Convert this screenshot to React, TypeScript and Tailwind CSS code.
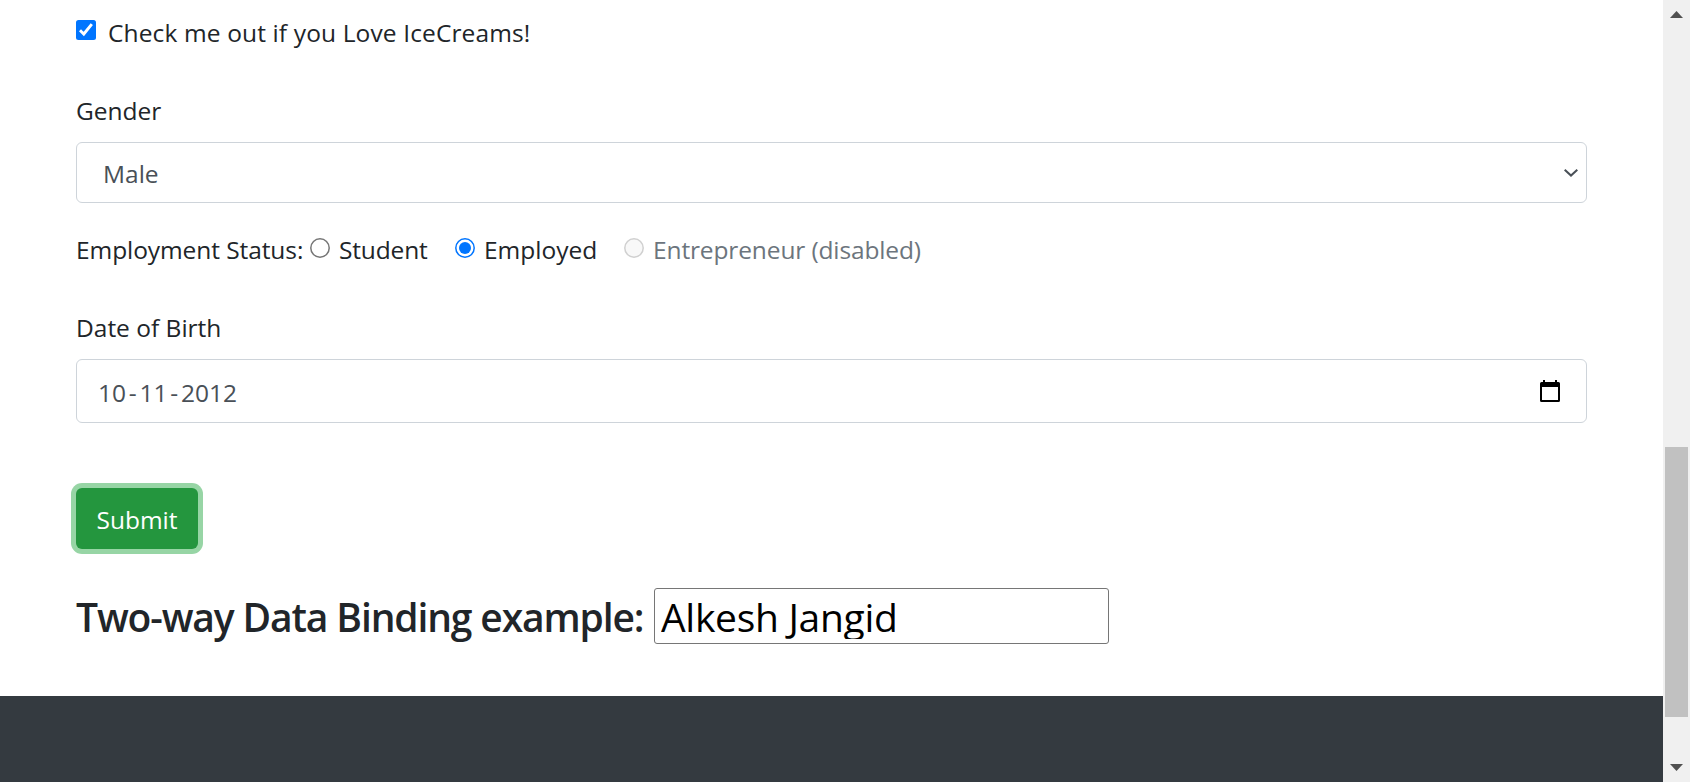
import type { ReactNode } from "react";

function CheckedBox() {
  return (
    <svg className="block size-5 shrink-0" viewBox="0 0 20 20">
      <rect width="20" height="20" rx="2.5" fill="#0075ff" />
      <path d="M4 10.3 L7.8 14 L15.8 4.2" fill="none" stroke="#fff" strokeWidth="2.9" />
    </svg>
  );
}

function Radio({ state }: { state: "off" | "on" | "disabled" }) {
  const stroke = state === "on" ? "#0075ff" : state === "off" ? "#767676" : "#d0d0d0";
  return (
    <svg className="mt-1.5 block size-5 shrink-0" viewBox="0 0 20 20">
      <circle cx="10" cy="10" r="9.2" fill={state === "disabled" ? "#f8f8f8" : "#fff"} stroke={stroke} strokeWidth="1.5" />
      {state === "on" && <circle cx="10" cy="10" r="6" fill="#0075ff" />}
    </svg>
  );
}

function Label({ children }: { children: ReactNode }) {
  return <div className="h-9 leading-9">{children}</div>;
}

function ScrollBar() {
  return (
    <div className="flex w-[27px] shrink-0 flex-col items-center bg-[#f0f0f0] pr-px">
      <svg className="mt-[11px] block h-[7px] w-[13px]" viewBox="0 0 13 7">
        <path d="M6.5 0 L13 7 H0 Z" fill="#505050" />
      </svg>
      <div className="mt-[429px] h-[270px] w-[23px] bg-[#c1c1c1]" />
      <svg className="mt-[47px] block h-[7px] w-[13px]" viewBox="0 0 13 7">
        <path d="M0 0 H13 L6.5 7 Z" fill="#505050" />
      </svg>
    </div>
  );
}

export default function App() {
  return (
    <div className="flex h-[782px] w-[1690px] overflow-hidden bg-white font-['Open_Sans',sans-serif] text-[24.5px] whitespace-nowrap text-[#212529]">
      <div className="flex flex-1 flex-col">
        <div className="h-[696px] shrink-0 pr-[76px] pl-[76px] pt-[15px]">
          <div className="flex h-9 leading-9">
            <div className="pt-[5px]"><CheckedBox /></div>
            <span className="ml-3 tracking-[0.13px]">Check me out if you Love IceCreams!</span>
          </div>
          <div className="mt-[42px]"><Label>Gender</Label></div>
          <div className="mt-[13px] flex h-[61px] items-center justify-between rounded-md border border-[#ced4da] pr-[8px] pl-[26px] text-[#495057]">
            <span className="pt-[3px]">Male</span>
            <svg className="block h-[8px] w-[14px]" viewBox="0 0 14 8">
              <path d="M0.7 0.8 L7 6.6 L13.3 0.8" fill="none" stroke="#495057" strokeWidth="2" />
            </svg>
          </div>
          <div className="mt-[29px] flex h-9 leading-9">
            <span className="w-[234px] tracking-[-0.08px]">Employment Status:</span>
            <Radio state="off" />
            <span className="ml-[9px] w-[116px] tracking-[-0.15px]">Student</span>
            <Radio state="on" />
            <span className="ml-[9px] w-[140px]">Employed</span>
            <Radio state="disabled" />
            <span className="ml-[9px] tracking-[-0.13px] text-[#6c757d]">Entrepreneur (disabled)</span>
          </div>
          <div className="mt-[42px]"><Label>Date of Birth</Label></div>
          <div className="mt-[13px] flex h-[64px] items-center justify-between rounded-md border border-[#ced4da] pr-[26px] pl-[21px] text-[#495057]">
            <span className="pt-[4px]">10<span className="mx-[2.8px]">-</span>11<span className="mx-[2.8px]">-</span>2012</span>
            <svg className="block h-[22px] w-[20px]" viewBox="0 0 20 22">
              <path fillRule="evenodd" d="M3 0 H5 V2 H15 V0 H17 V2 H18.5 Q20 2 20 3.5 V20.5 Q20 22 18.5 22 H1.5 Q0 22 0 20.5 V3.5 Q0 2 1.5 2 H3 Z M2 7 V20 H18 V7 Z" fill="#000" />
            </svg>
          </div>
          <button className="mt-[65px] flex h-[61px] w-[122px] items-center justify-center rounded-md bg-[#24963e] pt-[3px] text-white shadow-[0_0_0_5px_#97d5a5]">
            Submit
          </button>
          <div className="mt-[39px] flex h-14 items-center text-[39px] leading-[56px]">
            <span className="w-[578px] pt-0.5 font-semibold tracking-[-1.13px]">Two-way Data Binding example:</span>
            <div className="h-14 w-[455px] rounded-[3px] border border-[#767676] px-[6px] pb-1 text-black">
              <div className="h-[50px] overflow-hidden leading-[55px] tracking-[-0.3px]">Alkesh Jangid</div>
            </div>
          </div>
        </div>
        <div className="flex-1 bg-[#343a40]" />
      </div>
      <ScrollBar />
    </div>
  );
}
